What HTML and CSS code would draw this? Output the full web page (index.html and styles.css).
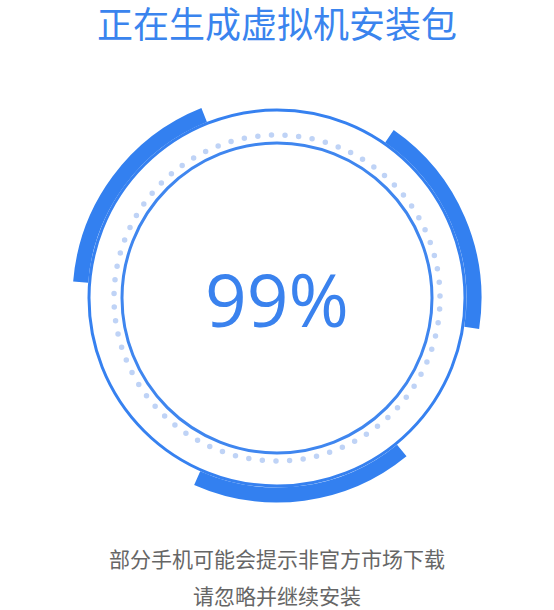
FILE: index.html
```html
<!DOCTYPE html>
<html lang="zh-CN">
<head>
<meta charset="utf-8">
<title>正在生成虚拟机安装包</title>
<link rel="stylesheet" href="styles.css">
</head>
<body>
<main class="page">
  <h1 class="title">正在生成虚拟机安装包</h1>
  <div class="dial">
    <svg class="dial-svg" width="420" height="420" viewBox="0 0 420 420" aria-hidden="true">
      <circle class="ring-outer" cx="210" cy="210" r="188"/>
      <circle class="ring-dots" cx="210" cy="210" r="163"/>
      <circle class="ring-inner" cx="210" cy="210" r="155"/>
      <path class="arc" d="M13.63 194.20 A197 197 0 0 1 137.16 26.96"/>
      <path class="arc" d="M322.43 48.23 A197 197 0 0 1 404.73 239.80"/>
      <path class="arc" d="M334.78 362.45 A197 197 0 0 1 130.19 390.11"/>
    </svg>
    <div class="percent">99%</div>
  </div>
  <p class="note">部分手机可能会提示非官方市场下载<br>请忽略并继续安装</p>
</main>
</body>
</html>
```
FILE: styles.css
```css
html, body {
  margin: 0;
  padding: 0;
  background: #ffffff;
}
.page {
  width: 554px;
  display: flex;
  flex-direction: column;
  align-items: center;
  font-family: "Noto Sans CJK SC", "Noto Sans", sans-serif;
}
.title {
  margin: 3px 0 0;
  font-size: 36px;
  line-height: 38px;
  font-weight: 400;
  color: #3a84ee;
}
.dial {
  margin-top: 47px;
  display: grid;
  width: 420px;
  height: 420px;
}
.dial-svg {
  grid-area: 1 / 1;
  display: block;
}
.ring-outer {
  fill: none;
  stroke: #3681f0;
  stroke-width: 3;
}
.ring-inner {
  fill: none;
  stroke: #3f86ef;
  stroke-width: 3;
}
.ring-dots {
  fill: none;
  stroke: #bfd3f6;
  stroke-width: 5.5;
  stroke-linecap: round;
  stroke-dasharray: 0 13.656;
  stroke-dashoffset: 2.5;
}
.arc {
  fill: none;
  stroke: #3380f0;
  stroke-width: 15;
}
.percent {
  grid-area: 1 / 1;
  align-self: center;
  justify-self: center;
  font-family: "Open Sans", "Noto Sans", sans-serif;
  font-size: 73px;
  line-height: 1;
  color: #3a82ee;
  margin-top: 0;
}
.note {
  margin: 32px 0 0;
  font-size: 21px;
  line-height: 37px;
  color: #666666;
  text-align: center;
}
```
